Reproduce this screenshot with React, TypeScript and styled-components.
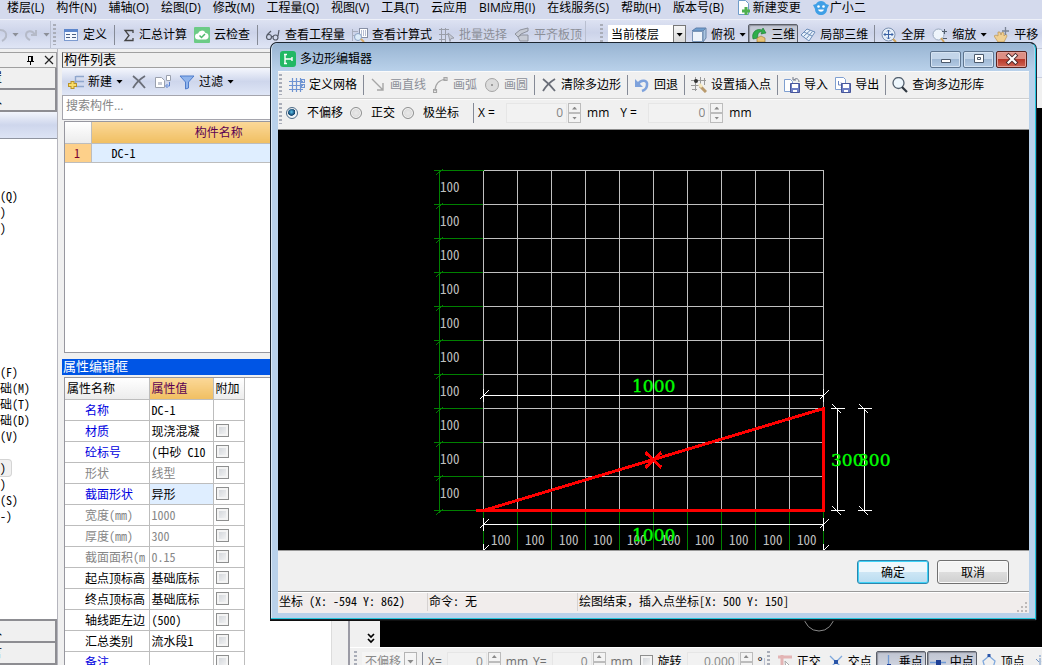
import React from "react";
import styled, { createGlobalStyle, css } from "styled-components";

const UI = `"Open Sans", "Noto Sans CJK SC", sans-serif`;
const SONG = `"Noto Sans Mono CJK SC", "Liberation Mono", "Noto Sans CJK SC", monospace`;

const Global = createGlobalStyle`
  * { box-sizing: border-box; }
  body { margin: 0; background: #f0f0f0; font: 12px/16px ${UI}; color: #000; overflow: hidden; }
  button, input, select { font: inherit; color: inherit; margin: 0; padding: 0; }
`;

/* ---------- shell ---------- */

const Shell = styled.div`
  position: relative;
  display: flex;
  flex-direction: column;
  height: 100vh;
  overflow: hidden;
`;
const MenuBar = styled.nav`
  display: flex;
  gap: 12px;
  flex: none;
  height: 20px;
  padding: 0 7px;
  background: #d4daed;
  border-bottom: 1px solid #eef1f9;
  white-space: nowrap;
`;
const MenuItem = styled.button`
  display: flex;
  align-items: center;
  gap: 1px;
  height: 15px;
  border: 0;
  background: none;
  white-space: nowrap;
`;
const Ribbon = styled.div`
  display: flex;
  align-items: center;
  flex: none;
  height: 29px;
  padding-top: 1px;
  background: linear-gradient(#dde2f2, #ccd3e9 45%, #dfe5f5);
  border-bottom: 1px solid #c3c9d8;
  overflow: hidden;
`;
const Group = styled.div<{ $gap?: number; $pad?: string; $line?: boolean }>`
  display: flex;
  align-items: center;
  flex: none;
  gap: ${(p) => p.$gap ?? 7}px;
  padding: ${(p) => p.$pad ?? "0"};
  height: 100%;
  border-right: ${(p) => (p.$line ? "1px solid #b9bfd0" : "0")};
`;
const Grip = styled.span`
  flex: none;
  width: 3px;
  height: 21px;
  background: repeating-linear-gradient(#a9adb8 0 2px, transparent 2px 4px);
`;
const Sep = styled.span<{ $tight?: boolean }>`
  flex: none;
  width: 1px;
  height: 20px;
  margin: 0 ${(p) => (p.$tight ? "-1px" : "0")};
  background: #858a96;
`;
const ToolButton = styled.button<{ $pressed?: boolean; $tuck?: number }>`
  display: flex;
  align-items: center;
  flex: none;
  gap: 4px;
  height: 22px;
  border: 0;
  background: none;
  white-space: nowrap;
  &:disabled { color: #8c8f98; }
  ${(p) =>
    p.$pressed &&
    css`
      padding: 0 2px;
      margin: 0 -${p.$tuck ?? 3}px;
      border: 1px solid #5b5f69;
      border-radius: 2px;
      background: linear-gradient(#bfc4d1, #d7dbe6);
      box-shadow: inset 1px 1px 1px #8d919c;
    `}
`;
const Caret = styled.i`
  width: 7px;
  height: 4px;
  background: currentColor;
  clip-path: polygon(0 0, 100% 0, 50% 100%);
`;
const Picker = styled.select<{ $w: number }>`
  appearance: none;
  flex: none;
  width: ${(p) => p.$w}px;
  height: 20px;
  padding-left: 3px;
  border: 0;
  border-radius: 0;
  background: #fff;
  outline: 0;
  &:disabled { background: #f5f5f5; color: #8a8a8a; opacity: 1; }
`;
const PickerWrap = styled.span`
  display: flex;
  flex: none;
`;
const PickerArrow = styled.span<{ $off?: boolean }>`
  display: flex;
  align-items: center;
  justify-content: center;
  flex: none;
  width: 13px;
  height: 20px;
  margin-left: -13px;
  border: 1px solid ${(p) => (p.$off ? "#b4b4b4" : "#777")};
  color: ${(p) => (p.$off ? "#8a8a8a" : "#000")};
  background: linear-gradient(#f6f6f6, ${(p) => (p.$off ? "#f0f0f0" : "#d4d4d4")});
  pointer-events: none;
`;
const Workspace = styled.main`
  display: flex;
  flex: 1;
  min-height: 0;
`;

/* ---------- navigation column ---------- */

const Nav = styled.aside`
  display: flex;
  flex-direction: column;
  flex: none;
  width: 58px;
  padding-top: 3px;
  border-right: 1px solid #b5b5bd;
  overflow: hidden;
`;
const NavHead = styled.div`
  display: flex;
  align-items: center;
  justify-content: flex-end;
  gap: 5px;
  flex: none;
  height: 16px;
  border: 1px solid #a0a0a0;
  border-left: 0;
`;
const NavTab = styled.button`
  flex: none;
  height: 22px;
  border: 1px solid #8d8d92;
  border-width: 0 2px 2px 0;
  background: #f0f0f0;
  text-align: left;
  text-indent: -46px;
  white-space: nowrap;
  overflow: hidden;
`;
const NavStrip = styled.div`
  flex: none;
  height: 27px;
  background: linear-gradient(#f2f5fc, #ced6ec 50%, #dde4f5);
  border-bottom: 1px solid #8f94a0;
`;
const NavList = styled.ul`
  flex: 1;
  min-height: 0;
  margin: 0;
  padding: 49px 0 0;
  list-style: none;
  background: #fff;
  border-bottom: 2px solid #8d8d92;
  font-family: ${SONG};
  overflow: hidden;
`;
const NavItem = styled.li<{ $on?: boolean }>`
  width: ${(p) => (p.$on ? "11px" : "auto")};
  height: 16px;
  white-space: pre;
  ${(p) => p.$on && css`background: #f0f0f0; border-radius: 0 3px 3px 0; box-shadow: 0 0 0 1px #d4d4d4;`}
`;

/* ---------- component and property panels ---------- */

const Panels = styled.section`
  display: flex;
  flex-direction: column;
  flex: none;
  width: 269px;
  margin-left: 4px;
  padding-top: 3px;
`;
const PanelTitle = styled.h2<{ $active?: boolean }>`
  flex: none;
  height: 16px;
  margin: 0;
  padding-left: 1px;
  font: 13px/14px ${SONG};
  ${(p) =>
    p.$active
      ? css`background: #0055e5; color: #fff;`
      : css`background: #efefef; border: 1px solid #a0a0a0; border-left-color: #555; line-height: 12px;`}
`;
const PanelTools = styled.div`
  display: flex;
  align-items: center;
  flex: none;
  gap: 8px;
  height: 27px;
  padding-left: 6px;
  background: linear-gradient(#f5f7fd, #ced6ec 50%, #dfe6f6);
`;
const Search = styled.input`
  flex: none;
  height: 25px;
  padding: 0 3px 4px;
  border: 1px solid #a5a5ad;
  border-width: 1px 0 1px 1px;
  background: #fff;
  outline: 0;
  &::placeholder { color: #868686; opacity: 1; }
`;
const Sheet = styled.div<{ $h?: number }>`
  flex: ${(p) => (p.$h ? "none" : "1")};
  height: ${(p) => (p.$h ? p.$h + "px" : "auto")};
  min-height: 0;
  margin: ${(p) => (p.$h ? "1px 0 6px 2px" : "2px 0 0 2px")};
  border: 1px solid #97979f;
  border-width: ${(p) => (p.$h ? "1px 0 1px 1px" : "1px 0 0 1px")};
  background: #fff;
  overflow: hidden;
`;
const Table = styled.table<{ $w?: string }>`
  width: ${(p) => p.$w ?? "auto"};
  table-layout: fixed;
  border-collapse: collapse;
  font-family: ${SONG};
`;
const Th = styled.th<{ $hot?: boolean; $center?: boolean }>`
  height: 21px;
  padding: 0 2px;
  border-right: 1px solid #bdbdbd;
  border-bottom: 1px solid #bdbdbd;
  font-weight: 400;
  line-height: 16px;
  text-align: ${(p) => (p.$center ? "center" : "left")};
  white-space: nowrap;
  color: ${(p) => (p.$hot ? "#5b0052" : "#000")};
  background: ${(p) => (p.$hot ? "linear-gradient(#fbd898, #f0bf62)" : "linear-gradient(#fff, #ececec)")};
`;
const Td = styled.td<{ $tone?: string; $bg?: string; $pad?: number; $h?: number }>`
  height: ${(p) => p.$h ?? 21}px;
  max-width: 0;
  padding: 0 0 0 ${(p) => p.$pad ?? 2}px;
  border-right: 1px solid #bdbdbd;
  border-bottom: 1px solid #bdbdbd;
  line-height: 16px;
  white-space: pre;
  overflow: hidden;
  color: ${(p) => p.$tone ?? "#000"};
  background: ${(p) => p.$bg ?? "#fff"};
`;
const Check = styled.input.attrs({ type: "checkbox" })`
  appearance: none;
  display: block;
  flex: none;
  width: 13px;
  height: 13px;
  border: 1px solid #8e8f8f;
  background: linear-gradient(135deg, #cdd1d6, #f8f8f8);
  box-shadow: inset 0 0 0 2px #f4f4f4;
`;
const ScrollColumn = styled.div`
  flex: none;
  width: 17px;
  background: #f0f0f0;
  border-left: 1px solid #dcdcdc;
`;

/* ---------- drawing view behind the dialog ---------- */

const View = styled.section`
  display: flex;
  flex-direction: column;
  flex: 1;
  min-width: 0;
  border-left: 2px solid #9b9ba5;
`;
const ViewBars = styled.div`
  flex: none;
  height: 59px;
  background: linear-gradient(#e8edf8 0 28px, #c9cfdf 28px 29px, #f0f0f0 29px);
`;
const ViewStage = styled.div`
  display: flex;
  flex: 1;
  min-height: 0;
  background: #000;
`;
const ViewSide = styled.div`
  display: flex;
  align-items: flex-end;
  justify-content: flex-end;
  flex: none;
  width: 30px;
  padding-right: 2px;
  background: #f0f0f0;
`;
const StageDrawing = styled.div`
  display: flex;
  align-items: flex-end;
  flex: 1;
  padding-left: 422px;
`;
const ViewFoot = styled.div`
  display: flex;
  align-items: center;
  flex: none;
  height: 18px;
  padding-top: 10px;
  background: #f0f0f0;
  border-top: 1px solid #fff;
  overflow: hidden;
`;

/* ---------- number boxes ---------- */

const Spin = styled.span<{ $w: number }>`
  display: flex;
  flex: none;
  gap: 1px;
  width: ${(p) => p.$w}px;
  height: 20px;
`;
const SpinInput = styled.input`
  flex: 1;
  min-width: 0;
  padding-right: 3px;
  border: 1px solid #e6e6e6;
  background: #f2f2f2;
  text-align: right;
  &:disabled { color: #858585; }
`;
const SpinKeys = styled.span`
  display: flex;
  flex-direction: column;
  flex: none;
  width: 13px;
`;
const SpinKey = styled.button<{ $down?: boolean }>`
  display: flex;
  align-items: center;
  justify-content: center;
  height: 10px;
  border: 1px solid #bcbcbc;
  background: #f3f3f3;
  &::before {
    content: "";
    width: 5px;
    height: 3px;
    background: #8a8a8a;
    clip-path: ${(p) => (p.$down ? "polygon(0 0, 100% 0, 50% 100%)" : "polygon(50% 0, 100% 100%, 0 100%)")};
  }
`;

/* ---------- dialog ---------- */

const Dialog = styled.section`
  position: absolute;
  z-index: 2;
  left: 270px;
  right: 6px;
  top: 42px;
  padding: 0 6px 6px;
  border: 1px solid #1c2530;
  border-right-color: #22c6dc;
  border-radius: 7px 7px 0 0;
  box-shadow: inset 0 -1px #22c6dc, inset 1px 0 #dce9f6, 0 1px #101010, 1px 0 #223;
  background: #b9d1ea;
`;
const TitleBar = styled.header`
  display: flex;
  align-items: center;
  gap: 4px;
  height: 28px;
  margin: 0 -5px;
  padding: 4px 7px 0 8px;
  border-radius: 6px 6px 0 0;
  background: linear-gradient(#98b4d2, #b9d1ea);
`;
const TitleText = styled.h1`
  flex: 1;
  margin: 0;
  font: 12px/16px ${UI};
`;
const WinButton = styled.button<{ $close?: boolean }>`
  display: flex;
  align-items: center;
  justify-content: center;
  width: 31px;
  height: 17px;
  margin: 0 0 0 -2px;
  border: 1px solid ${(p) => (p.$close ? "#5a2420" : "#5f7690")};
  border-radius: 2px;
  box-shadow: inset 0 0 0 1px ${(p) => (p.$close ? "#e3a199" : "#d5e3f2")};
  background: ${(p) =>
    p.$close
      ? "linear-gradient(#dd8f84 0 45%, #b8392a 50%, #cf6555)"
      : "linear-gradient(#c3d5e9 0 45%, #a0b9d5 50%, #b4cbe4)"};
`;
const Body = styled.div`
  margin-left: 1px;
  background: #f0f0f0;
`;
const Bar = styled.div<{ $last?: boolean }>`
  display: flex;
  align-items: center;
  gap: ${(p) => (p.$last ? 4 : 7)}px;
  height: ${(p) => (p.$last ? 31 : 28)}px;
  padding: ${(p) => (p.$last ? "0 1px 3px" : "0 1px 1px")};
  border-top: 1px solid #fbfbfb;
  border-bottom: 1px solid ${(p) => (p.$last ? "#8e8e8e" : "#cfcfcf")};
  white-space: nowrap;
  overflow: hidden;
`;
const RadioRow = styled.div`
  display: flex;
  gap: 7px;
  padding-right: 10px;
`;
const RadioLabel = styled.label`
  display: flex;
  align-items: center;
  gap: 9px;
`;
const Radio = styled.input.attrs({ type: "radio" })`
  appearance: none;
  width: 12px;
  height: 12px;
  border: 1px solid #8e8f8f;
  border-radius: 50%;
  background: radial-gradient(#e9e9e9, #d2d2d2);
  box-shadow: inset 0 0 0 1px #f6f6f6;
  &:checked { border-color: #4c6a86; background: radial-gradient(circle at 45% 40%, #5cc3ea, #0d3f6b 42%, #eef4f8 50%); }
`;
const FieldLabel = styled.label<{ $w?: number; $off?: boolean }>`
  flex: none;
  width: ${(p) => (p.$w ? p.$w + "px" : "auto")};
  color: ${(p) => (p.$off ? "#6f6f6f" : "#000")};
`;
const Canvas = styled.div`
  height: 420px;
  background: #000;
  overflow: hidden;
  svg { display: block; }
`;
const Actions = styled.footer`
  display: flex;
  justify-content: flex-end;
  gap: 8px;
  height: 42px;
  padding: 9px 20px 0;
  border-top: 1px solid #999;
  border-bottom: 1px solid #999;
`;
const ActionButton = styled.button<{ $primary?: boolean }>`
  width: 72px;
  height: 24px;
  border: 1px solid ${(p) => (p.$primary ? "#2d86ad" : "#707070")};
  border-radius: 3px;
  box-shadow: inset 0 0 0 1px ${(p) => (p.$primary ? "#3fd2f7" : "#fafafa")};
  background: ${(p) =>
    p.$primary
      ? "linear-gradient(#eef7fc 0 48%, #cde6f5 52%, #b9dcf0)"
      : "linear-gradient(#f3f3f3 0 48%, #dddddd 52%, #cfcfcf)"};
  font-family: ${SONG};
`;
const Status = styled.div`
  display: flex;
  align-items: flex-start;
  height: 21px;
  border-top: 1px solid #fff;
  background: #f1edec;
  font-family: ${SONG};
  white-space: nowrap;
  svg { align-self: flex-end; }
`;
const StatusCell = styled.span<{ $w?: number }>`
  flex: ${(p) => (p.$w ? "none" : "1")};
  width: ${(p) => (p.$w ? p.$w + "px" : "auto")};
  height: 18px;
  padding-left: 1px;
  border-right: 1px solid ${(p) => (p.$w ? "#d6d2d1" : "transparent")};
`;

/* ---------- icons ---------- */

const art: Record<string, React.ReactNode> = {
  undoGrey: <path d="M0 3c5 0 7 3 6 7-1 2-2 3-4 4" fill="none" stroke="#b5bac8" strokeWidth="2" />,
  redoGrey: <path d="M13 3v5H8M12 8C9 2 3 4 3 8c0 3 2 4 4 5" fill="none" stroke="#b5bac8" strokeWidth="2" />,
  define: (
    <>
      <rect x="1.500" y="2.500" width="13" height="11" fill="#f4f8ff" stroke="#7d9bd0" />
      <path d="M1 2h14v3H1z" fill="#5d86cc" />
      <path d="M3 7.500h4M3 10.500h4M9 7.500h4M9 10.500h4" stroke="#4b5f84" />
    </>
  ),
  sigma: <path d="M11 6V3.500H3l4 5-4 5h8V11" fill="none" stroke="#444" strokeWidth="1.300" />,
  cloud: (
    <>
      <rect width="16" height="16" rx="1" fill="#6ccb86" />
      <path d="M4 12.500a3 3 0 0 1 0-6 4 4 0 0 1 7.500-.5A3.300 3.300 0 0 1 12 12.500z" fill="#fff" />
      <path d="M5.500 8.500l2 2 3.500-3.500" fill="none" stroke="#4cb96c" strokeWidth="1.500" />
    </>
  ),
  glasses: (
    <g fill="none" stroke="#555b68" strokeWidth="1.200">
      <circle cx="4" cy="10" r="2.500" />
      <circle cx="10.500" cy="10.500" r="2.500" />
      <path d="M6.500 9.500h1.500M2 8l4-4M13 9l1-6" />
    </g>
  ),
  formula: (
    <>
      <rect x="7.500" y="1.500" width="8" height="9" fill="#fff" stroke="#8790a5" />
      <path d="M9 4h5M9 6h5M9 8h5" stroke="#6f7ca5" strokeDasharray="1 1" />
      <path d="M.5 2v12M0 4.500h6M0 8.500h3" stroke="#a7adbd" />
      <circle cx="6" cy="10" r="3.500" fill="#dcecf9" stroke="#8ba2c4" />
      <path d="M9 12l3 3" stroke="#d8ab68" strokeWidth="2" />
    </>
  ),
  batch: (
    <g fill="none" stroke="#9a9ea9">
      <path d="M0 2.500h10M0 7.500h9M0 12.500h7M2.500 1v14M6.500 1v14" />
      <path d="M9 6l6 5-3 .5-1 3z" fill="#c6cad5" />
    </g>
  ),
  slab: (
    <g fill="#c6cad4" stroke="#8e929d">
      <path d="M1 7l5-4 8-2v3l-7 3-3 3z" />
      <path d="M4 10l3-2h7v6H6z" />
    </g>
  ),
  cube: (
    <>
      <path d="M1 4l4-3h10l-3 3z" fill="#6f9fd0" stroke="#5f7fa8" />
      <path d="M12 4l3-3v10l-3 4z" fill="#a9c4e0" stroke="#6a86aa" />
      <path d="M1.500 4.500h10v10h-10z" fill="#eef4fb" stroke="#7b96b8" />
    </>
  ),
  orbit: (
    <>
      <path d="M2 12c-2-7 4-11 9-9l1-2 3 5-5 1 1-2c-3-1-5 2-4 6z" fill="#2fae4a" stroke="#17752b" strokeWidth=".6" />
      <path d="M6 11l4-2 4 2v4H6z" fill="#e8c477" stroke="#9b7730" strokeWidth=".6" />
    </>
  ),
  grid3d: (
    <g fill="#e8f1fb" stroke="#6c8db8">
      <path d="M1 8l6-6 8 3-6 9z" />
      <path d="M4 5l8 4M3.500 9.500L10 3.500M6.500 11.500l6-7" fill="none" />
    </g>
  ),
  full: (
    <>
      <circle cx="7.500" cy="7.500" r="6.500" fill="#e6eff9" stroke="#7c91b0" />
      <path d="M7.500 3v9M3 7.500h9M6 4.500L7.500 3 9 4.500M6 10.500L7.500 12 9 10.500M4.500 6L3 7.500 4.500 9M10.500 6L12 7.500 10.500 9" fill="none" stroke="#3a62a5" />
      <path d="M12 12l3 3" stroke="#d0a45c" strokeWidth="2" />
    </>
  ),
  zoom: (
    <>
      <circle cx="6.500" cy="7.500" r="5.500" fill="#eef4fb" stroke="#9aa9bf" />
      <path d="M12.500 2v5M10 4.500h5M11 11.500h4" stroke="#54606f" />
      <path d="M9 11l3 4" stroke="#cfa35d" strokeWidth="2" />
    </>
  ),
  pan: (
    <>
      <path d="M0 9l2-1 2 1V5l2 0 1 3 1-3 2 1v3l2-2 1 2-3 6H4z" fill="#f0d093" stroke="#bb9350" strokeWidth=".7" />
      <path d="M11.500 0v8M8 4h7" stroke="#7b8494" strokeWidth="1.300" />
    </>
  ),
  newPage: (
    <>
      <path d="M2.500 .5h7l3 3v11h-10z" fill="#fff" stroke="#6f9cc9" />
      <path d="M10 7v8M6 11h8" stroke="#4fb04f" strokeWidth="3" />
    </>
  ),
  mascot: (
    <>
      <path d="M0 5l3-1c2-4 8-4 10 0l3 1-2 4c0 8-12 8-12 0z" fill="#3f9fe6" />
      <circle cx="5.500" cy="6.500" r="1.300" fill="#fff" />
      <circle cx="10.500" cy="6.500" r="1.300" fill="#fff" />
      <path d="M5 9.500c1 3 5 3 6 0z" fill="#fff" />
    </>
  ),
  pin: <path d="M5.500 4v5M9.500 4v5M8.500 4v5M5 4.500h5M4 9.500h7M7.500 10v3" fill="none" stroke="#000" />,
  close: <path d="M3 4l8 8M11 4l-8 8" stroke="#222" strokeWidth="1.200" />,
  create: (
    <>
      <path d="M7.500 2v11M8 2.500h8M8 7.500h8M8 12.500h8" stroke="#8fa6cc" strokeWidth="1.400" />
      <path d="M4.500 7v8M0 11h9" stroke="#b99328" strokeWidth="4" />
      <path d="M4.500 8v6M1 11h7" stroke="#f8dc68" strokeWidth="2" />
    </>
  ),
  cross: <path d="M2 2c4 3 8 7 12 12M14 2C9 5 5 9 2 14" fill="none" stroke="#6a6e78" strokeWidth="1.800" />,
  copy: (
    <>
      <path d="M.5 3.500h6l3 3v7h-9zM11.500 1.500h4v5h-4z" fill="#fff" stroke="#9aa0ad" />
      <path d="M3 8h4v3H3z" fill="#c6cad4" />
      <path d="M14.500 8v4h-3M12.500 10l-2 2 2 2" fill="none" stroke="#5a82d0" />
    </>
  ),
  funnel: <path d="M1 2h14l-5.500 6v6l-3 1V8z" fill="#8fb4ec" stroke="#4f7ccb" />,
  logo: (
    <>
      <rect width="16" height="16" rx="3" fill="#22b864" />
      <path d="M5 3v10M5 8h7M4 3.500h3M4 12.500h3M12 6v4" fill="none" stroke="#fff" strokeWidth="1.400" />
    </>
  ),
  mesh: (
    <path
      d="M0 4.500h14M0 8.500h14M0 12.500h14M3.500 1v14M7.500 1v14M11.500 1v14M12.500 2.500h3v3h-3zM12.500 7.500h3v3h-3z"
      fill="none"
      stroke="#6f94d2"
      strokeWidth="1.200"
    />
  ),
  line: <path d="M2 2l11 11M13 6v7H7" fill="none" stroke="#a5a5a5" strokeWidth="1.400" />,
  arc: <path d="M2 14C2 7 6 3 13 2M.5 12.500h3v3h-3zM11 .5h3v3h-3z" fill="none" stroke="#a5a5a5" strokeWidth="1.200" />,
  circle: (
    <>
      <circle cx="8" cy="8" r="6.500" fill="#dcdcdc" stroke="#a5a5a5" />
      <circle cx="8" cy="8" r="1" fill="#888" />
    </>
  ),
  undo: (
    <>
      <path d="M4 7c3-5 10-4 9 1 0 3-2 5-5 6" fill="none" stroke="#7ea2dc" strokeWidth="2.600" />
      <path d="M1 2v8h8z" fill="#7ea2dc" />
    </>
  ),
  insert: (
    <>
      <path d="M4.500 0v14M9.500 0v8M13.500 1v7M0 3.500h15M0 8.500h8M1 12.500h5" stroke="#9a9a9a" />
      <circle cx="5" cy="4" r="2" fill="#333" />
      <path d="M9 9l6 6" stroke="#b99a6c" strokeWidth="3" />
      <path d="M8 7l3 3" stroke="#f6e7bb" strokeWidth="3" />
    </>
  ),
  importing: (
    <>
      <path d="M.5 2.500h6l2 2v10h-8z" fill="#fff" stroke="#7f9fd0" />
      <path d="M6.500 6.500h9v9h-9z" fill="#6d7fc4" stroke="#46559a" />
      <path d="M8 7h6v4H8zM9 13h4v2H9z" fill="#fff" />
      <path d="M15 5c0-4-4-4-5-2M9 0v3h3" fill="none" stroke="#6f7686" />
    </>
  ),
  exporting: (
    <>
      <path d="M.5 .5h8l2 2v10h-10z" fill="#fff" stroke="#7f9fd0" />
      <path d="M3.500 4v4h5M6 5.500L8.500 8 6 10.500" fill="none" stroke="#6a85c0" />
      <path d="M6.500 6.500h9v9h-9z" fill="#6d7fc4" stroke="#46559a" />
      <path d="M8 7h6v4H8zM9 13h4v2H9z" fill="#fff" />
    </>
  ),
  lens: (
    <>
      <circle cx="6.500" cy="6" r="5.500" fill="#eef7fd" stroke="#54616f" strokeWidth="1.300" />
      <path d="M10 10l5 5" stroke="#303840" strokeWidth="2.200" />
    </>
  ),
  min: <path d="M3.500 8.500h9v3h-9z" fill="#fff" stroke="#4c5a6c" />,
  max: <path d="M3.500 3.500h9v8h-9zM6.500 6.500h3v2h-3z" fill="#fff" stroke="#4c5a6c" />,
  exit: (
    <>
      <path d="M4.500 4.500l7 7M11.500 4.500l-7 7" stroke="#4b2a2c" strokeWidth="4" strokeLinecap="square" />
      <path d="M4.500 4.500l7 7M11.500 4.500l-7 7" stroke="#fff" strokeWidth="2.200" strokeLinecap="square" />
    </>
  ),
  chevrons: <path d="M4 3l3 3 3-3M4 8l3 3 3-3" fill="none" stroke="#000" strokeWidth="1.700" />,
  ortho: (
    <>
      <path d="M1 3h14M5 1v14" stroke="#e3b4b4" strokeWidth="3" />
      <path d="M8 7l5 5-3 0-1 3z" fill="#fff" stroke="#aaa" />
    </>
  ),
  cross2: (
    <>
      <path d="M2 2l12 12M14 2L2 14" stroke="#7fa8dc" strokeWidth="1.300" />
      <path d="M6 6h4v4H6z" fill="#2a55a8" />
    </>
  ),
  perp: (
    <>
      <path d="M9.500 1v13M1 12.500h14" stroke="#6f9ad6" strokeWidth="1.300" />
      <path d="M8 10h4v4H8z" fill="#1d3f96" />
    </>
  ),
  mid: (
    <>
      <path d="M0 8.500h16" stroke="#6f9ad6" strokeWidth="1.500" />
      <path d="M6 6h5v5H6z" fill="#1d3f96" />
    </>
  ),
  vertex: (
    <>
      <path d="M8 2l6 5-2 7H4L2 7z" fill="none" stroke="#7fa8dc" strokeWidth="1.300" />
      <path d="M6.500 0h3v3h-3z" fill="#2a55a8" />
    </>
  ),
  coord: <path d="M8 4v8M3 13h8M4 5l3 3M13 4l-3 4M8 1v2" fill="none" stroke="#6f93c4" />,
};

const Svg = styled.svg`
  display: block;
  flex: none;
`;
const Icon = ({ name, w = 16 }: { name: string; w?: number }) => (
  <Svg width={w} height={16} viewBox={`0 0 ${w} 16`} aria-hidden="true">
    {art[name]}
  </Svg>
);

type ToolProps = {
  icon: string;
  w?: number;
  children?: React.ReactNode;
  caret?: boolean;
  off?: boolean;
  pressed?: boolean;
  tuck?: number;
};
const Tool = ({ icon, w, children, caret, off, pressed, tuck }: ToolProps) => (
  <ToolButton type="button" disabled={off} $pressed={pressed} $tuck={tuck} aria-label={children ? undefined : icon}>
    <Icon name={icon} w={w} />
    {children}
    {caret && <Caret />}
  </ToolButton>
);

const NumberBox = ({ id, value, w }: { id: string; value: string; w: number }) => (
  <Spin $w={w}>
    <SpinInput id={id} defaultValue={value} disabled />
    <SpinKeys>
      <SpinKey type="button" aria-label="+" disabled />
      <SpinKey type="button" aria-label="-" disabled $down />
    </SpinKeys>
  </Spin>
);

/* ---------- polygon drawing ---------- */

const STEP = 34;
const steps = Array.from({ length: 11 }, (_, i) => i);
const cells = steps.slice(0, 10);
const X0 = 205;
const X1 = X0 + 10 * STEP;
const Y0 = 40;
const Y1 = Y0 + 10 * STEP;

const Small = styled.text`
  font: 13px ${SONG};
  fill: #c0c0c0;
`;
const Big = styled.text`
  font: 17px "DejaVu Serif", "Liberation Serif", serif;
  fill: #00ff00;
  stroke: #00ff00;
  stroke-width: 0.4px;
`;

const HDim = ({ y }: { y: number }) => (
  <g stroke="#fff">
    <path d={`M${X0} ${y}H${X1}`} />
    {[X0, X1].map((x) => (
      <path key={x} d={`M${x} ${y - 7}v13M${x - 4} ${y + 4}l9 -9`} />
    ))}
  </g>
);
const VDim = ({ x }: { x: number }) => (
  <g stroke="#fff">
    <path d={`M${x} ${Y1 - 3 * STEP}V${Y1}`} />
    {[Y1 - 3 * STEP, Y1].map((y) => (
      <path key={y} d={`M${x - 7} ${y}h14M${x - 5} ${y - 4}l9 9`} />
    ))}
  </g>
);

const Drawing = () => (
  <svg width="751" height="420" viewBox="0 0 751 420" shapeRendering="crispEdges" role="img" aria-label="多边形">
    <g transform="translate(0.500 0.500)" fill="none">
      <g stroke="#008000">
        <path d={`M161 ${Y0}V${Y1}`} />
        {steps.map((i) => (
          <path key={i} d={`M155 ${Y0 + i * STEP}H${X0}M158 ${Y0 + i * STEP + 4}l7 -6`} />
        ))}
        {steps.map((i) => (
          <path key={i} d={`M${X0 + i * STEP} ${Y1}V420`} />
        ))}
      </g>
      <g stroke="#c0c0c0">
        {steps.map((i) => (
          <path key={i} d={`M${X0} ${Y0 + i * STEP}H${X1}M${X0 + i * STEP} ${Y0}V${Y1}`} />
        ))}
      </g>
      <HDim y={265} />
      <HDim y={394} />
      <HDim y={420} />
      <VDim x={559} />
      <VDim x={586} />
      <path d={`M197 ${Y1}H${X1}V${Y1 - 3 * STEP}L${X0} ${Y1}M367 322l16 15M383 322l-16 15`} stroke="#ff0000" strokeWidth="3" />
    </g>
    {cells.map((i) => (
      <Small key={i} x={162} y={Y0 + i * STEP + 22}>100</Small>
    ))}
    {cells.map((i) => (
      <Small key={i} x={X0 + i * STEP + 8} y={415}>100</Small>
    ))}
    <Big x={354} y={262}>1000</Big>
    <Big x={354} y={411}>1000</Big>
    <Big x={553} y={336}>300</Big>
    <Big x={580} y={336}>300</Big>
  </svg>
);

/* ---------- data ---------- */

const menus = ["楼层(L)", "构件(N)", "辅轴(O)", "绘图(D)", "修改(M)", "工程量(Q)", "视图(V)", "工具(T)", "云应用", "BIM应用(I)", "在线服务(S)", "帮助(H)", "版本号(B)"];
const navRows = ["(Q)", ")", ")", " ", " ", " ", " ", " ", " ", " ", " ", "(F)", "础(M)", "础(T)", "础(D)", "(V)", " ", ")", ")", "(S)", "-)"];
const BLUE = "#0000e0";
const GREY = "#868686";
const props: { name: string; value: string; tone?: string; check?: boolean; on?: boolean; grey?: boolean }[] = [
  { name: "名称", value: "DC-1", tone: BLUE, check: false },
  { name: "材质", value: "现浇混凝", tone: BLUE },
  { name: "砼标号", value: "(中砂 C10", tone: BLUE },
  { name: "形状", value: "线型", grey: true },
  { name: "截面形状", value: "异形", tone: BLUE, on: true },
  { name: "宽度(mm)", value: "1000", grey: true },
  { name: "厚度(mm)", value: "300", grey: true },
  { name: "截面面积(m", value: "0.15", grey: true },
  { name: "起点顶标高", value: "基础底标" },
  { name: "终点顶标高", value: "基础底标" },
  { name: "轴线距左边", value: "(500)" },
  { name: "汇总类别", value: "流水段1" },
  { name: "备注", value: "", tone: BLUE },
];

export default function App() {
  return (
    <Shell>
      <Global />
      <MenuBar>
        {menus.map((m) => (
          <MenuItem key={m} type="button">{m}</MenuItem>
        ))}
        <MenuItem type="button"><Icon name="newPage" />新建变更</MenuItem>
        <MenuItem type="button"><Icon name="mascot" />广小二</MenuItem>
      </MenuBar>
      <Ribbon>
        <Group $gap={4} $line>
          <Icon name="undoGrey" w={8} />
          <ToolButton type="button" disabled aria-label="撤销"><Caret /></ToolButton>
          <Icon name="redoGrey" />
          <ToolButton type="button" disabled aria-label="恢复"><Caret /></ToolButton>
        </Group>
        <Group $line $pad="0 3px 0 2px">
          <Grip />
          <Tool icon="define">定义</Tool>
          <Sep />
          <Tool icon="sigma" w={13}>汇总计算</Tool>
          <Tool icon="cloud">云检查</Tool>
          <Sep />
          <Tool icon="glasses">查看工程量</Tool>
          <Tool icon="formula">查看计算式</Tool>
          <Tool icon="batch" off>批量选择</Tool>
          <Tool icon="slab" off>平齐板顶</Tool>
        </Group>
        <Group $gap={5} $pad="0 5px 0 14px">
          <Grip />
          <PickerWrap>
            <Picker $w={78} aria-label="楼层范围"><option>当前楼层</option></Picker>
            <PickerArrow><Caret /></PickerArrow>
          </PickerWrap>
        </Group>
        <Group>
          <Tool icon="cube" caret>俯视</Tool>
          <Tool icon="orbit" pressed tuck={5}>三维</Tool>
          <Tool icon="grid3d">局部三维</Tool>
          <Sep $tight />
          <Tool icon="full">全屏</Tool>
          <Tool icon="zoom" caret>缩放</Tool>
          <Tool icon="pan" caret>平移</Tool>
        </Group>
      </Ribbon>

      <Workspace>
        <Nav>
          <NavHead>
            <Icon name="pin" w={14} />
            <Icon name="close" w={14} />
          </NavHead>
          <NavTab type="button">工程设置</NavTab>
          <NavTab type="button">绘图输入</NavTab>
          <NavStrip />
          <NavList>
            {navRows.map((t, i) => (
              <NavItem key={i} $on={i === 17}>{t}</NavItem>
            ))}
          </NavList>
          <NavTab type="button">单构输入</NavTab>
          <NavTab type="button">报表预言</NavTab>
        </Nav>

        <Panels>
          <PanelTitle>构件列表</PanelTitle>
          <PanelTools>
            <Tool icon="create" caret>新建</Tool>
            <Tool icon="cross" />
            <Tool icon="copy" />
            <Tool icon="funnel" caret>过滤</Tool>
          </PanelTools>
          <Search placeholder="搜索构件..." aria-label="搜索构件" />
          <Sheet $h={232}>
            <Table $w="282px">
              <colgroup><col width="26" /><col /></colgroup>
              <thead><tr><Th /><Th $hot $center>构件名称</Th></tr></thead>
              <tbody>
                <tr>
                  <Td $h={19} $tone="#7a0030" $bg="#fdd08a" $pad={9}>1</Td>
                  <Td $h={19} $bg="#dfeeff" $pad={20}>DC-1</Td>
                </tr>
              </tbody>
            </Table>
          </Sheet>
          <PanelTitle $active>属性编辑框</PanelTitle>
          <Sheet>
            <Table $w="179px">
              <colgroup><col width="84" /><col width="64" /><col width="31" /></colgroup>
              <thead><tr><Th>属性名称</Th><Th $hot>属性值</Th><Th>附加</Th></tr></thead>
              <tbody>
                {props.map((p) => (
                  <tr key={p.name}>
                    <Td $tone={p.grey ? GREY : p.tone} $pad={20}>{p.name}</Td>
                    <Td $tone={p.grey ? GREY : "#000"} $bg={p.on ? "#dfeeff" : undefined}>{p.value}</Td>
                    <Td>{p.check !== false && <Check aria-label={p.name} />}</Td>
                  </tr>
                ))}
              </tbody>
            </Table>
          </Sheet>
        </Panels>
        <ScrollColumn />

        <View>
          <ViewBars />
          <ViewStage>
            <ViewSide><Icon name="chevrons" w={14} /></ViewSide>
            <StageDrawing>
              <svg width="34" height="32" viewBox="0 0 34 32" aria-hidden="true">
                <circle cx="17" cy="1" r="15" fill="none" stroke="#8a8a8a" />
              </svg>
            </StageDrawing>
          </ViewStage>
          <ViewFoot>
            <Group $gap={5} $pad="0 1px 0 4px" $line>
              <Grip />
              <PickerWrap>
                <Picker $w={55} disabled aria-label="偏移方式"><option>不偏移</option></Picker>
                <PickerArrow $off><Caret /></PickerArrow>
              </PickerWrap>
              <Sep />
              <FieldLabel htmlFor="vx" $off>X=</FieldLabel>
              <NumberBox id="vx" value="0" w={54} />
              <FieldLabel as="span" $off>mm</FieldLabel>
              <FieldLabel htmlFor="vy" $off>Y=</FieldLabel>
              <NumberBox id="vy" value="0" w={54} />
              <FieldLabel as="span" $off $w={24}>mm</FieldLabel>
              <Check id="rot" />
              <FieldLabel htmlFor="rot">旋转</FieldLabel>
              <NumberBox id="deg" value="0.000" w={66} />
              <FieldLabel as="span">°</FieldLabel>
            </Group>
            <Group $pad="0 0 0 2px">
              <Grip />
              <Tool icon="ortho">正交</Tool>
              <Tool icon="cross2">交点</Tool>
              <Tool icon="perp" pressed>垂点</Tool>
              <Tool icon="mid" pressed>中点</Tool>
              <Tool icon="vertex">顶点</Tool>
              <Tool icon="coord" />
            </Group>
          </ViewFoot>
        </View>
      </Workspace>

      <Dialog role="dialog" aria-labelledby="dialog-title">
        <TitleBar>
          <Icon name="logo" />
          <TitleText id="dialog-title">多边形编辑器</TitleText>
          <WinButton type="button" aria-label="最小化"><Icon name="min" /></WinButton>
          <WinButton type="button" aria-label="最大化"><Icon name="max" /></WinButton>
          <WinButton type="button" aria-label="关闭" $close><Icon name="exit" /></WinButton>
        </TitleBar>
        <Body>
          <Bar>
            <Grip />
            <Tool icon="mesh">定义网格</Tool>
            <Sep $tight />
            <Tool icon="line" off>画直线</Tool>
            <Tool icon="arc" off>画弧</Tool>
            <Tool icon="circle" off>画圆</Tool>
            <Sep $tight />
            <Tool icon="cross">清除多边形</Tool>
            <Sep $tight />
            <Tool icon="undo">回退</Tool>
            <Sep $tight />
            <Tool icon="insert">设置插入点</Tool>
            <Sep $tight />
            <Tool icon="importing">导入</Tool>
            <Tool icon="exporting">导出</Tool>
            <Sep $tight />
            <Tool icon="lens">查询多边形库</Tool>
          </Bar>
          <Bar $last>
            <Grip />
            <RadioRow>
              <RadioLabel><Radio name="offset" defaultChecked />不偏移</RadioLabel>
              <RadioLabel><Radio name="offset" />正交</RadioLabel>
              <RadioLabel><Radio name="offset" />极坐标</RadioLabel>
            </RadioRow>
            <Sep />
            <FieldLabel htmlFor="px" $w={24}>X =</FieldLabel>
            <NumberBox id="px" value="0" w={75} />
            <Group $pad="0 7px 0 2px">mm</Group>
            <FieldLabel htmlFor="py" $w={24}>Y =</FieldLabel>
            <NumberBox id="py" value="0" w={75} />
            <Group $pad="0 7px 0 2px">mm</Group>
          </Bar>
          <Canvas><Drawing /></Canvas>
          <Actions>
            <ActionButton type="button" $primary>确定</ActionButton>
            <ActionButton type="button">取消</ActionButton>
          </Actions>
          <Status>
            <StatusCell $w={150}>坐标 (X: -594 Y: 862)</StatusCell>
            <StatusCell $w={150}>命令: 无</StatusCell>
            <StatusCell>绘图结束，插入点坐标[X: 500 Y: 150]</StatusCell>
            <svg width="12" height="16" viewBox="0 0 12 16" aria-hidden="true">
              <path d="M8 5h2v2H8zM8 9h2v2H8zM8 13h2v2H8zM4 9h2v2H4zM4 13h2v2H4zM0 13h2v2H0z" fill="#bdb9b8" />
            </svg>
          </Status>
        </Body>
      </Dialog>
    </Shell>
  );
}
